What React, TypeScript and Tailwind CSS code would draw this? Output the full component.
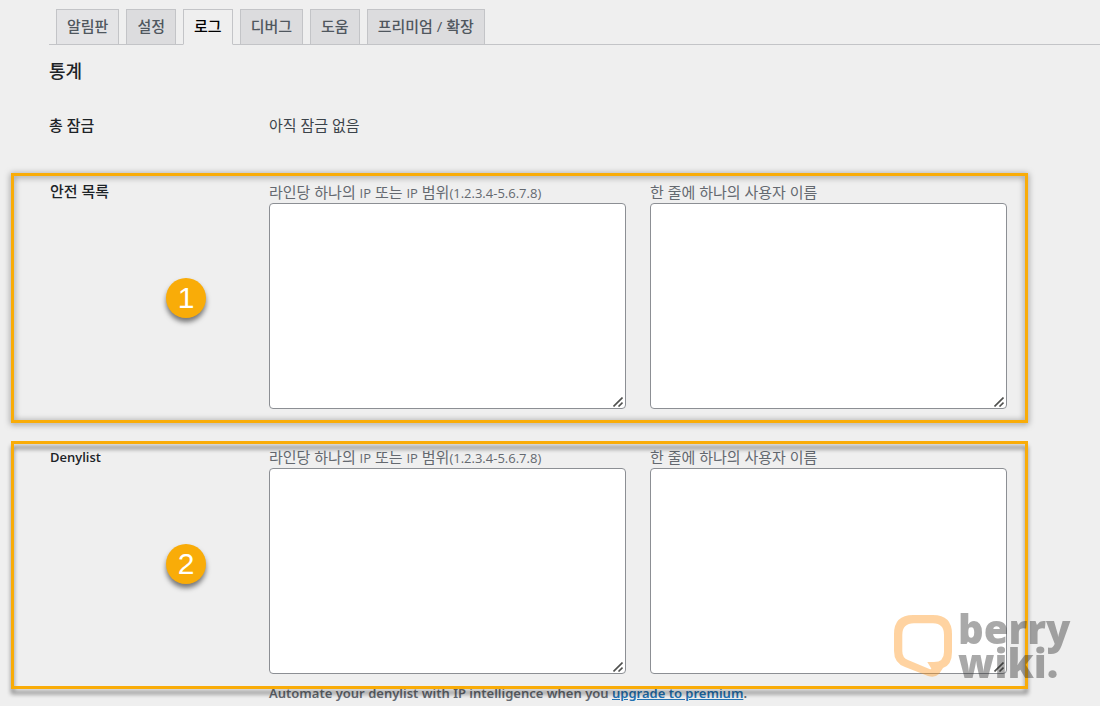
import { useState } from "react";
import type { ReactNode } from "react";

const tabs = ["알림판", "설정", "로그", "디버그", "도움", "프리미엄 / 확장"];

const Tabs = () => {
  const [active, setActive] = useState(2);

  return (
    <nav className="flex gap-[7px] border-b border-[#c3c4c7] pt-[9px] pl-[7px]">
      {tabs.map((tab, i) => (
        <a
          key={tab}
          href="#"
          onClick={(e) => {
            e.preventDefault();
            setActive(i);
          }}
          className={`-mb-px border border-[#c3c4c7] px-[10px] pt-1 pb-1.5 text-[15px] leading-6 font-medium whitespace-nowrap ${
            i === active
              ? "border-b-[#efefef] bg-[#efefef] text-black"
              : i === 0
                ? "bg-[#e4e4e6] text-[#50575e]"
                : "bg-[#dcdcde] text-[#50575e]"
          }`}
        >
          {tab}
        </a>
      ))}
    </nav>
  );
};

// latin letters look too big next to hangul at the same size
const Latin = ({ children }: { children: ReactNode }) => (
  <span className="text-[13px] leading-none">{children}</span>
);

const Field = ({ id, label }: { id: string; label: ReactNode }) => (
  <div className="min-w-0 flex-1">
    <label htmlFor={id} className="block text-[15px] leading-[22px] whitespace-nowrap text-[#646970]">
      {label}
    </label>
    <div className="relative">
      <textarea
        id={id}
        className="block h-[206px] w-full resize-none rounded border border-[#8c8f94] bg-white px-2 py-1 text-sm text-[#2c3338]"
      />
      <svg
        className="pointer-events-none absolute right-[3px] bottom-[2px]"
        width="10"
        height="10"
        viewBox="0 0 10 10"
        stroke="#50514f"
        strokeWidth="1.6"
      >
        <path d="M0.5 9.5L9.5 0.5M5.5 9.5L9.5 5.5" />
      </svg>
    </div>
  </div>
);

type ListRowProps = {
  id: string;
  title: ReactNode;
  step: number;
  frame: string;
  badge: string;
};

const ListRow = ({ id, title, step, frame, badge }: ListRowProps) => (
  <section className="relative flex">
    <h3 className="w-[219px] shrink-0 text-[15px] leading-5 font-medium text-[#1d2327]">
      {title}
    </h3>
    <div className="flex min-w-0 flex-1 gap-6">
      <Field
        id={`${id}-ip`}
        label={
          <>
            라인당 하나의 <Latin>IP</Latin> 또는 <Latin>IP</Latin> 범위
            <Latin>(1.2.3.4-5.6.7.8)</Latin>
          </>
        }
      />
      <Field id={`${id}-user`} label="한 줄에 하나의 사용자 이름" />
    </div>
    <div
      className={`pointer-events-none absolute -right-[21px] -left-[39px] border-3 border-[#f9ac08] ${frame}`}
    />
    <span
      className={`absolute left-[116px] flex size-10 items-center justify-center rounded-full bg-[#f9ac08] font-['Liberation_Sans',sans-serif] text-[30px] leading-none text-white shadow-[0_4px_5px_rgba(0,0,0,0.5)] ${badge}`}
    >
      {step}
    </span>
  </section>
);

const Watermark = () => (
  <div className="pointer-events-none absolute top-[612px] left-[893px] flex gap-[5px] opacity-40">
    <svg className="mt-[2px]" width="60" height="64" viewBox="0 0 60 64" fill="#ff9416">
      <path
        fillRule="evenodd"
        d="M20 1H40Q59 1 59 20V38Q59 51 50 54L46 60Q42 64 35 62L12 53Q1 49 1 37V20Q1 1 20 1ZM21 9.3Q9.3 9.3 9.3 21V37Q9.3 44 15 46L37 55.3Q39 55.5 38 54L34.3 48H41Q51 48 51 38V21Q51 9.3 40 9.3Z"
      />
    </svg>
    <p className="font-['Open_Sans',sans-serif] text-[40px] leading-[34px] font-extrabold text-[#2a2a2a]">
      berry
      <br />
      wiki.
    </p>
  </div>
);

const App = () => {
  return (
    <div className="relative min-h-screen overflow-hidden bg-[#efefef] pl-[49px] font-['Open_Sans','Noto_Sans_CJK_KR',sans-serif] text-[#3c434a]">
      <Tabs />
      <main className="pr-[93px]">
        <h2 className="mt-[14px] text-lg leading-6 font-medium text-[#1d2327]">통계</h2>
        <dl className="mt-8 flex text-[15px] leading-5">
          <dt className="w-[220px] shrink-0 font-medium text-[#1d2327]">총 잠금</dt>
          <dd>아직 잠금 없음</dd>
        </dl>
        <div className="mt-[46px] ml-px flex flex-col gap-[37px]">
          <ListRow
            id="safelist"
            title="안전 목록"
            step={1}
            frame="-top-[8px] -bottom-[14px] drop-shadow-[0_1px_3px_rgba(0,0,0,0.5)]"
            badge="top-[97px]"
          />
          <ListRow
            id="denylist"
            title={<span className="text-[13px] leading-none font-semibold">Denylist</span>}
            step={2}
            frame="-top-[5px] -bottom-[15px] drop-shadow-[0_5px_2px_rgba(0,0,0,0.45)]"
            badge="top-[98px]"
          />
        </div>
        <p className="mt-[9px] ml-[220px] font-['Noto_Sans',sans-serif] text-[13px] leading-5 font-semibold text-[#646970]">
          Automate your denylist with IP intelligence when you{" "}
          <a href="#" className="text-[#2271b1] underline">
            upgrade to premium
          </a>
          .
        </p>
      </main>
      <Watermark />
    </div>
  );
};

export default App;
